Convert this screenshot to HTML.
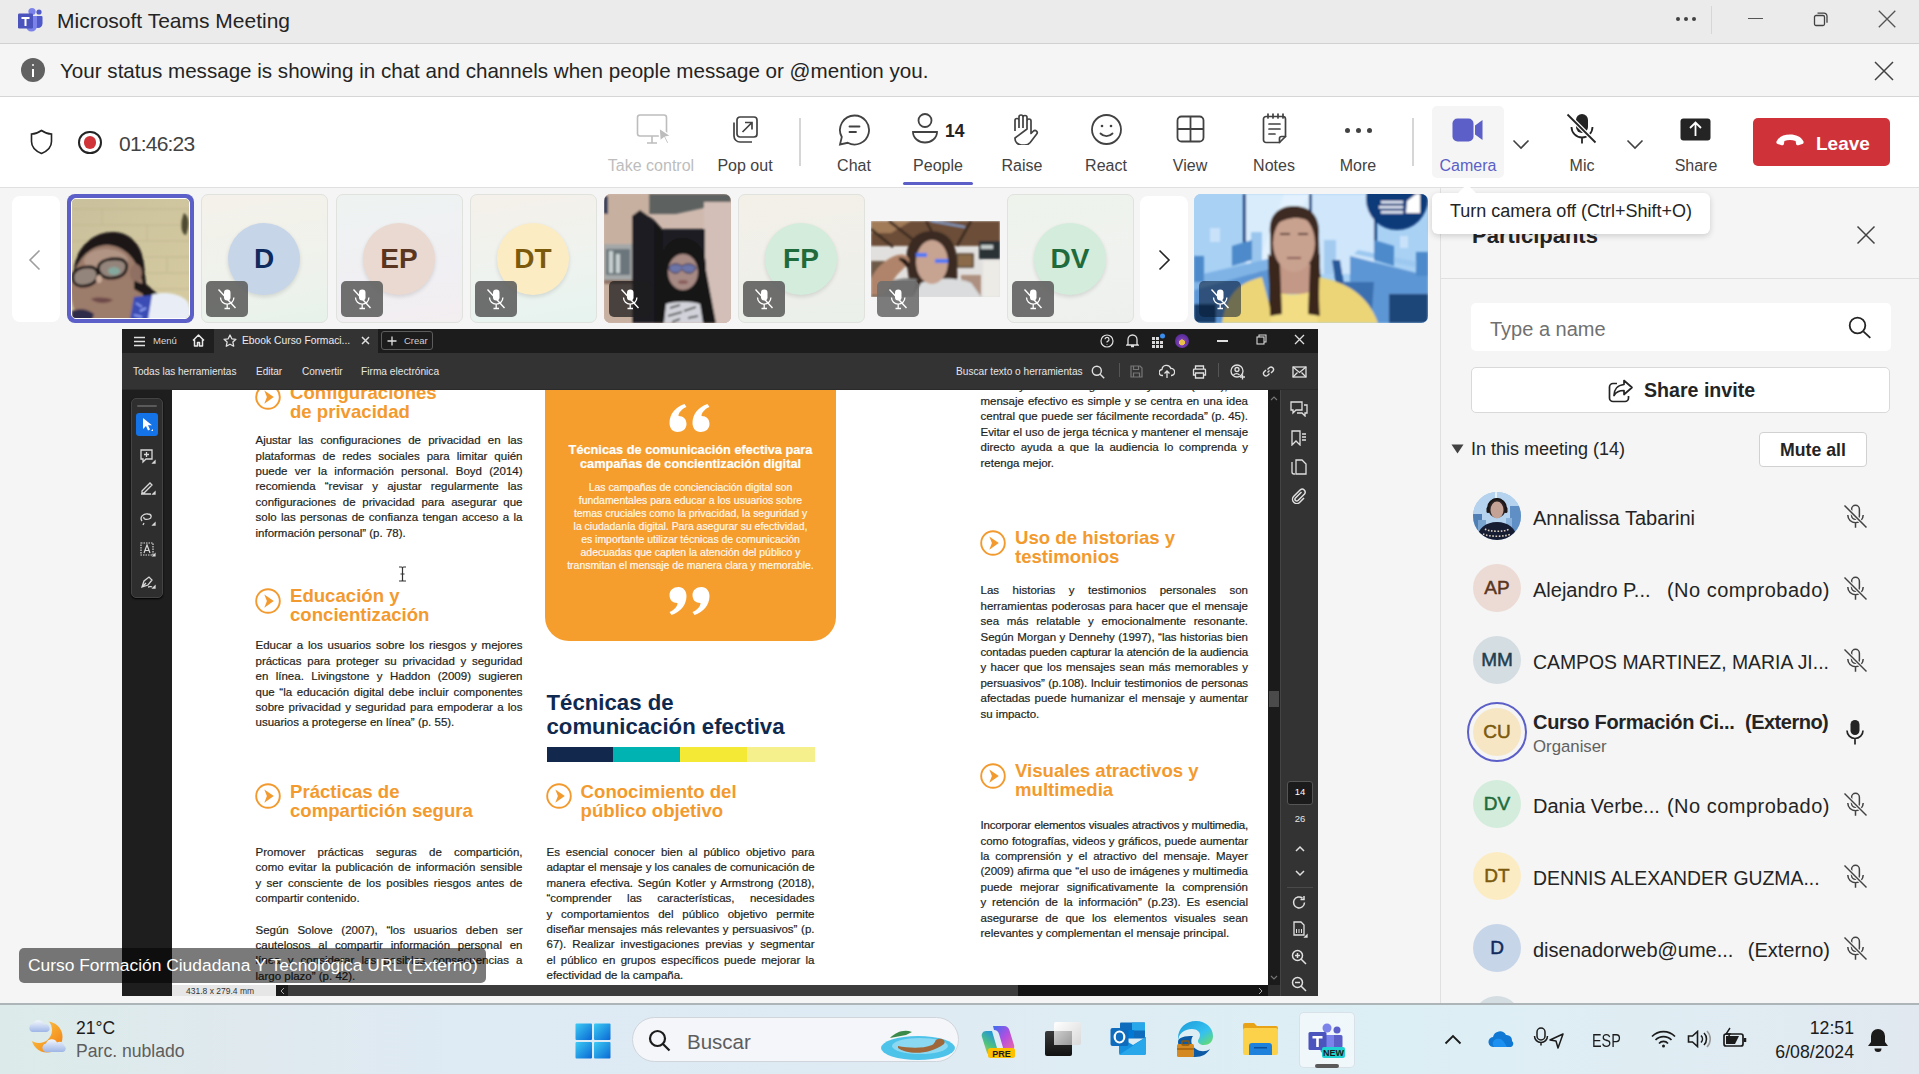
<!DOCTYPE html>
<html><head><meta charset="utf-8">
<style>
*{box-sizing:border-box;margin:0;padding:0}
html,body{width:1919px;height:1074px;overflow:hidden;background:#f5f5f5;font-family:"Liberation Sans",sans-serif;color:#242424}
.a{position:absolute}
#title{left:0;top:0;width:1919px;height:44px;background:#ebebeb;border-bottom:1px solid #d1d1d1}
#banner{left:0;top:44px;width:1919px;height:53px;background:#f5f5f5;border-bottom:1px solid #d6d6d6}
#tb{left:0;top:97px;width:1919px;height:91px;background:#fff;border-bottom:1px solid #e0e0e0}
.lbl{font-size:16px;color:#424242;text-align:center;width:90px;top:60px;white-space:nowrap}
#strip{left:0;top:188px;width:1440px;height:816px;background:#f5f5f5}
#panel{left:1440px;top:188px;width:479px;height:816px;background:#f5f5f5;border-left:1px solid #e0e0e0}
#taskbar{left:0;top:1003px;width:1919px;height:71px;background:linear-gradient(90deg,#dcebea 0,#dfe9ee 13%,#deeaf4 24%,#dfebf3 50%,#dceff5 73%,#dfedf3 85%,#e1e8f0 100%);border-top:2px solid #adb5b9}
#share{left:122px;top:329px;width:1196px;height:667px;background:#1e1e1e;overflow:hidden}
.ln{position:absolute;white-space:normal;-webkit-text-stroke:0.2px currentColor}
</style></head><body>
<!-- TITLE BAR -->
<div id="title" class="a">
  <svg class="a" style="left:17px;top:7px" width="27" height="25" viewBox="0 0 27 25">
    <circle cx="15" cy="4.5" r="3.6" fill="#7b83eb"/>
    <circle cx="22" cy="5" r="2.6" fill="#5059c9"/>
    <path d="M17 9h7.5a1 1 0 0 1 1 1v6.5a4.5 4.5 0 0 1-9 0z" fill="#5059c9"/>
    <path d="M9 9h11v10a5.5 5.5 0 0 1-11 0z" fill="#7b83eb"/>
    <rect x="1" y="6.5" width="15" height="15" rx="1.2" fill="#4b53bc"/>
    <path d="M4.5 10h8v2h-3v7h-2v-7h-3z" fill="#fff"/>
  </svg>
  <div class="a" style="left:57px;top:9px;font-size:21px;color:#242424;white-space:nowrap">Microsoft Teams Meeting</div>
  <div class="a" style="left:1676px;top:17px;width:22px;height:4px">
    <span class="a" style="left:0;top:0;width:4px;height:4px;border-radius:2px;background:#424242"></span>
    <span class="a" style="left:8px;top:0;width:4px;height:4px;border-radius:2px;background:#424242"></span>
    <span class="a" style="left:16px;top:0;width:4px;height:4px;border-radius:2px;background:#424242"></span>
  </div>
  <div class="a" style="left:1711px;top:6px;width:1px;height:28px;background:#d6d6d6"></div>
  <div class="a" style="left:1747.5px;top:17.5px;width:15px;height:1.4px;background:#555"></div>
  <svg class="a" style="left:1812px;top:10px" width="18" height="18" viewBox="0 0 18 18" fill="none" stroke="#424242" stroke-width="1.3">
    <rect x="2.5" y="5.5" width="10" height="10" rx="1.5"/>
    <path d="M5.5 3.2h6.5a3 3 0 0 1 3 3v6.5"/>
  </svg>
  <svg class="a" style="left:1877px;top:9px" width="20" height="20" viewBox="0 0 20 20" stroke="#555" stroke-width="1.3">
    <path d="M1.8 1.8L18.3 18.3M18.3 1.8L1.8 18.3"/>
  </svg>
</div>
<!-- BANNER -->
<div id="banner" class="a">
  <div class="a" style="left:21px;top:14px;width:24px;height:24px;border-radius:12px;background:#616161"></div>
  <div class="a" style="left:32px;top:20px;width:2.4px;height:2.4px;border-radius:2px;background:#fff"></div>
  <div class="a" style="left:32px;top:24.5px;width:2.4px;height:8.5px;background:#fff"></div>
  <div class="a" style="left:60px;top:15px;font-size:20.6px;color:#242424;white-space:nowrap">Your status message is showing in chat and channels when people message or @mention you.</div>
  <svg class="a" style="left:1874px;top:17px" width="20" height="20" viewBox="0 0 20 20" stroke="#424242" stroke-width="1.5">
    <path d="M1 1L19 19M19 1L1 19"/>
  </svg>
</div>
<!-- TOOLBAR -->
<div id="tb" class="a">
  <svg class="a" style="left:30px;top:32px" width="23" height="26" viewBox="0 0 23 26" fill="none" stroke="#242424" stroke-width="1.6">
    <path d="M11.5 1.5C8 4 5 5 1.5 5v7.5c0 6 4 9.5 10 12 6-2.5 10-6 10-12V5c-3.5 0-6.5-1-10-3.5z"/>
  </svg>
  <div class="a" style="left:78px;top:33.5px;width:23.5px;height:23.5px;border-radius:12px;border:2.8px solid #242424"></div>
  <div class="a" style="left:83.5px;top:39px;width:12.5px;height:12.5px;border-radius:7px;background:#d13438"></div>
  <div class="a" style="left:119px;top:35px;font-size:21px;color:#424242;white-space:nowrap;letter-spacing:-0.8px">01:46:23</div>

  <!-- take control -->
  <svg class="a" style="left:633px;top:17px" width="40" height="34" viewBox="0 0 40 34" fill="none" stroke="#bdbdbd" stroke-width="1.6">
    <rect x="4.5" y="1" width="29" height="21" rx="2.5"/>
    <path d="M14 29h10M19 22v7"/>
    <path d="M26 14l12 8-5 1 3 6-2 1-3-6-4 3z" fill="#bdbdbd" stroke="#fff" stroke-width="1.5"/>
  </svg>
  <div class="a lbl" style="left:606px;color:#bdbdbd">Take control</div>
  <!-- pop out -->
  <svg class="a" style="left:731px;top:19px" width="28" height="28" viewBox="0 0 28 28" fill="none" stroke="#424242" stroke-width="1.7">
    <rect x="6" y="1" width="20" height="20" rx="3"/>
    <path d="M3 6.5v13.5a6 6 0 0 0 6 6h12"/>
    <path d="M11.5 16L20.5 7M14 6.5h7v7"/>
  </svg>
  <div class="a lbl" style="left:700px">Pop out</div>
  <div class="a" style="left:799px;top:21px;width:2px;height:48px;background:#d6d6d6"></div>
  <!-- chat -->
  <svg class="a" style="left:838px;top:17px" width="33" height="32" viewBox="0 0 33 32" fill="none" stroke="#424242" stroke-width="1.8">
    <path d="M16.5 1.5a14.5 14.5 0 1 1-6.8 27.3L2 30.5l1.8-7.5A14.5 14.5 0 0 1 16.5 1.5z"/>
    <path d="M11.5 12.5h10M11.5 18h6.5" stroke-linecap="round"/>
  </svg>
  <div class="a lbl" style="left:809px">Chat</div>
  <!-- people -->
  <svg class="a" style="left:911px;top:16px" width="29" height="31" viewBox="0 0 29 31" fill="none" stroke="#424242" stroke-width="1.8">
    <circle cx="14" cy="7.5" r="6.5"/>
    <path d="M2 19h24c0 6-5.5 10.5-12 10.5S2 25 2 19z"/>
  </svg>
  <div class="a" style="left:945px;top:24px;font-size:17.5px;font-weight:700;color:#242424">14</div>
  <div class="a lbl" style="left:893px">People</div>
  <div class="a" style="left:903px;top:85px;width:70px;height:3px;border-radius:2px;background:#5b5fc7"></div>
  <!-- raise -->
  <svg class="a" style="left:1009px;top:17px" width="30" height="31" viewBox="0 0 30 31" fill="none" stroke="#424242" stroke-width="1.7" stroke-linejoin="round">
    <path d="M6 17V6.5a2 2 0 0 1 4 0V14M10 14V3a2 2 0 0 1 4 0v11M14 14V3.5a2 2 0 0 1 4 0V15M18 15V7a2 2 0 0 1 4 0v12.5l2.5-2.5a2.2 2.2 0 0 1 3.2 3l-6.5 8.5c-1.5 1.8-3.5 2.5-5.5 2.5h-3.2A6.5 6.5 0 0 1 6 24z"/>
  </svg>
  <div class="a lbl" style="left:977px">Raise</div>
  <!-- react -->
  <svg class="a" style="left:1090px;top:16px" width="33" height="33" viewBox="0 0 33 33" fill="none" stroke="#424242" stroke-width="1.8">
    <circle cx="16.5" cy="16.5" r="14.5"/>
    <path d="M10.5 20.5c3.5 3.5 8.5 3.5 12 0" stroke-linecap="round"/>
    <circle cx="12" cy="13" r="1.3" fill="#424242" stroke="none"/>
    <circle cx="21" cy="13" r="1.3" fill="#424242" stroke="none"/>
  </svg>
  <div class="a lbl" style="left:1061px">React</div>
  <!-- view -->
  <svg class="a" style="left:1176px;top:18px" width="29" height="28" viewBox="0 0 29 28" fill="none" stroke="#424242" stroke-width="1.8">
    <rect x="1.5" y="1.5" width="26" height="25" rx="4"/>
    <path d="M14.5 1.5v25M1.5 14h26"/>
  </svg>
  <div class="a lbl" style="left:1145px">View</div>
  <!-- notes -->
  <svg class="a" style="left:1261px;top:16px" width="27" height="31" viewBox="0 0 27 31" fill="none" stroke="#424242" stroke-width="1.7">
    <path d="M5 3.5h17a2.5 2.5 0 0 1 2.5 2.5v17.5l-6 6H5A2.5 2.5 0 0 1 2.5 27V6A2.5 2.5 0 0 1 5 3.5z"/>
    <path d="M18.5 29.5v-4a2 2 0 0 1 2-2h4M7 1v4M12 1v4M17 1v4M22 1v4M8 11h11M8 16h11M8 21h6" stroke-linecap="round"/>
  </svg>
  <div class="a lbl" style="left:1229px">Notes</div>
  <!-- more -->
  <div class="a" style="left:1345px;top:31px;width:5px;height:5px;border-radius:3px;background:#424242"></div>
  <div class="a" style="left:1356px;top:31px;width:5px;height:5px;border-radius:3px;background:#424242"></div>
  <div class="a" style="left:1367px;top:31px;width:5px;height:5px;border-radius:3px;background:#424242"></div>
  <div class="a lbl" style="left:1313px">More</div>
  <div class="a" style="left:1412px;top:21px;width:2px;height:48px;background:#d6d6d6"></div>
  <!-- camera -->
  <div class="a" style="left:1432px;top:9px;width:72px;height:72px;border-radius:5px;background:#f5f5f5"></div>
  <svg class="a" style="left:1452px;top:21px" width="32" height="24" viewBox="0 0 32 24">
    <rect x="0.5" y="0.5" width="21" height="23" rx="5" fill="#5b5fc7"/>
    <path d="M23 7.5l7.5-5.5v20l-7.5-5.5z" fill="#5b5fc7"/>
  </svg>
  <div class="a lbl" style="left:1423px;color:#5b5fc7">Camera</div>
  <svg class="a" style="left:1512px;top:42px" width="18" height="11" viewBox="0 0 18 11" fill="none" stroke="#424242" stroke-width="1.6"><path d="M1.5 1.5l7.5 7.5 7.5-7.5"/></svg>
  <!-- mic -->
  <svg class="a" style="left:1565px;top:16px" width="34" height="32" viewBox="0 0 34 32">
    <rect x="11" y="1" width="12" height="19" rx="6" fill="#242424"/>
    <path d="M6.5 14a10.5 10.5 0 0 0 21 0M17 24.5v6" fill="none" stroke="#242424" stroke-width="1.8"/>
    <path d="M2.5 1.5l28 28" stroke="#fff" stroke-width="4.5"/>
    <path d="M2.5 1.5l28 28" stroke="#242424" stroke-width="1.8"/>
  </svg>
  <div class="a lbl" style="left:1537px">Mic</div>
  <svg class="a" style="left:1626px;top:42px" width="18" height="11" viewBox="0 0 18 11" fill="none" stroke="#424242" stroke-width="1.6"><path d="M1.5 1.5l7.5 7.5 7.5-7.5"/></svg>
  <!-- share -->
  <svg class="a" style="left:1680px;top:21px" width="31" height="23" viewBox="0 0 31 23">
    <rect x="0.5" y="0.5" width="30" height="22" rx="3" fill="#242424"/>
    <path d="M15.5 18V5M10 10l5.5-5.5 5.5 5.5" fill="none" stroke="#fff" stroke-width="1.8"/>
  </svg>
  <div class="a lbl" style="left:1651px">Share</div>
  <!-- leave -->
  <div class="a" style="left:1753px;top:21px;width:137px;height:48px;border-radius:5px;background:#cf3339"></div>
  <svg class="a" style="left:1775px;top:36px" width="30" height="15" viewBox="0 0 30 15">
    <path d="M1.5 8.5C4 3.5 9 1.5 15 1.5s11 2 13.5 7c.4 1-.2 2.2-1.2 2.5l-4 1.2c-1 .3-2-.3-2.2-1.3l-.5-2.8c-1.8-.7-3.7-1-5.6-1s-3.8.3-5.6 1l-.5 2.8c-.2 1-1.2 1.6-2.2 1.3l-4-1.2C1.7 10.7 1.1 9.500 1.5 8.5z" fill="#fff"/>
  </svg>
  <div class="a" style="left:1816px;top:36px;font-size:19px;font-weight:700;color:#fff">Leave</div>
</div>
<div id="strip" class="a"></div>
<div class="a" style="left:12px;top:196px;width:48px;height:126px;border-radius:8px;background:#fff"></div>
<svg class="a" style="left:28px;top:249px" width="14" height="22" viewBox="0 0 14 22" fill="none" stroke="#9e9e9e" stroke-width="1.6"><path d="M11.5 1.5L2 11l9.5 9.5"/></svg>
<div class="a" style="left:1140px;top:196px;width:48px;height:126px;border-radius:8px;background:#fff"></div>
<svg class="a" style="left:1157px;top:249px" width="14" height="22" viewBox="0 0 14 22" fill="none" stroke="#242424" stroke-width="1.6"><path d="M2.5 1.5L12 11l-9.5 9.5"/></svg>
<div class="a" style="left:201px;top:194px;width:127px;height:129px;border-radius:7px;background:linear-gradient(170deg,#f4f1ea,#eef2ec 70%,#e6f2ea);border:1px solid #dfe2dd"></div>
<div class="a" style="left:228px;top:223px;width:72px;height:72px;border-radius:36px;background:#c7d5e9;box-shadow:0 2px 4px rgba(0,0,0,0.12);color:#0f2a5c;font-size:28px;font-weight:700;text-align:center;line-height:72px;letter-spacing:0px">D</div>
<div class="a" style="left:206px;top:281px;width:42px;height:36px;border-radius:5px;background:rgba(95,97,95,0.9)"></div>
<svg class="a" style="left:216px;top:288px" width="22" height="22" viewBox="0 0 22 22"><rect x="8" y="1.5" width="6.5" height="11" rx="3.25" fill="#fff"/><path d="M4.5 9.5a6.7 6.7 0 0 0 13.4 0M11.2 16.5v4M8.5 20.5h5.5" fill="none" stroke="#fff" stroke-width="1.3"/><path d="M2.5 1.5L19.5 20" stroke="#fff" stroke-width="1.4"/></svg>
<div class="a" style="left:336px;top:194px;width:127px;height:129px;border-radius:7px;background:linear-gradient(170deg,#eef3f1,#f0eff3 60%,#f3eef0);border:1px solid #dfe2dd"></div>
<div class="a" style="left:363px;top:223px;width:72px;height:72px;border-radius:36px;background:#ead9d1;box-shadow:0 2px 4px rgba(0,0,0,0.12);color:#5a3620;font-size:28px;font-weight:700;text-align:center;line-height:72px;letter-spacing:0px">EP</div>
<div class="a" style="left:341px;top:281px;width:42px;height:36px;border-radius:5px;background:rgba(95,97,95,0.9)"></div>
<svg class="a" style="left:351px;top:288px" width="22" height="22" viewBox="0 0 22 22"><rect x="8" y="1.5" width="6.5" height="11" rx="3.25" fill="#fff"/><path d="M4.5 9.5a6.7 6.7 0 0 0 13.4 0M11.2 16.5v4M8.5 20.5h5.5" fill="none" stroke="#fff" stroke-width="1.3"/><path d="M2.5 1.5L19.5 20" stroke="#fff" stroke-width="1.4"/></svg>
<div class="a" style="left:470px;top:194px;width:127px;height:129px;border-radius:7px;background:linear-gradient(170deg,#f5f0ea,#eef3ef 60%,#e6f3ef);border:1px solid #dfe2dd"></div>
<div class="a" style="left:497px;top:223px;width:72px;height:72px;border-radius:36px;background:#fcecc4;box-shadow:0 2px 4px rgba(0,0,0,0.12);color:#7b5a0c;font-size:28px;font-weight:700;text-align:center;line-height:72px;letter-spacing:0px">DT</div>
<div class="a" style="left:475px;top:281px;width:42px;height:36px;border-radius:5px;background:rgba(95,97,95,0.9)"></div>
<svg class="a" style="left:485px;top:288px" width="22" height="22" viewBox="0 0 22 22"><rect x="8" y="1.5" width="6.5" height="11" rx="3.25" fill="#fff"/><path d="M4.5 9.5a6.7 6.7 0 0 0 13.4 0M11.2 16.5v4M8.5 20.5h5.5" fill="none" stroke="#fff" stroke-width="1.3"/><path d="M2.5 1.5L19.5 20" stroke="#fff" stroke-width="1.4"/></svg>
<div class="a" style="left:738px;top:194px;width:127px;height:129px;border-radius:7px;background:linear-gradient(170deg,#f3f0e8,#efefea 60%,#eaf0ea);border:1px solid #dfe2dd"></div>
<div class="a" style="left:765px;top:223px;width:72px;height:72px;border-radius:36px;background:#d3ecdb;box-shadow:0 2px 4px rgba(0,0,0,0.12);color:#1f6b3b;font-size:28px;font-weight:700;text-align:center;line-height:72px;letter-spacing:0px">FP</div>
<div class="a" style="left:743px;top:281px;width:42px;height:36px;border-radius:5px;background:rgba(95,97,95,0.9)"></div>
<svg class="a" style="left:753px;top:288px" width="22" height="22" viewBox="0 0 22 22"><rect x="8" y="1.5" width="6.5" height="11" rx="3.25" fill="#fff"/><path d="M4.5 9.5a6.7 6.7 0 0 0 13.4 0M11.2 16.5v4M8.5 20.5h5.5" fill="none" stroke="#fff" stroke-width="1.3"/><path d="M2.5 1.5L19.5 20" stroke="#fff" stroke-width="1.4"/></svg>
<div class="a" style="left:1007px;top:194px;width:127px;height:129px;border-radius:7px;background:linear-gradient(170deg,#eef3ec,#f0f2ef 60%,#eef0ee);border:1px solid #dfe2dd"></div>
<div class="a" style="left:1034px;top:223px;width:72px;height:72px;border-radius:36px;background:#d3ecdb;box-shadow:0 2px 4px rgba(0,0,0,0.12);color:#1f6b3b;font-size:28px;font-weight:700;text-align:center;line-height:72px;letter-spacing:0px">DV</div>
<div class="a" style="left:1012px;top:281px;width:42px;height:36px;border-radius:5px;background:rgba(95,97,95,0.9)"></div>
<svg class="a" style="left:1022px;top:288px" width="22" height="22" viewBox="0 0 22 22"><rect x="8" y="1.5" width="6.5" height="11" rx="3.25" fill="#fff"/><path d="M4.5 9.5a6.7 6.7 0 0 0 13.4 0M11.2 16.5v4M8.5 20.5h5.5" fill="none" stroke="#fff" stroke-width="1.3"/><path d="M2.5 1.5L19.5 20" stroke="#fff" stroke-width="1.4"/></svg>
<!-- tile 0 video selected -->
<div class="a" style="left:67px;top:194px;width:127px;height:129px;border-radius:8px;background:#5b5fc7"></div>
<div class="a" style="left:71px;top:198px;width:119px;height:121px;border-radius:5px;overflow:hidden;background:#cdc39b;border:1px solid #fff">
<svg width="119" height="121" viewBox="0 0 119 121">
  <defs><filter id="bl0" x="-10%" y="-10%" width="120%" height="120%"><feGaussianBlur stdDeviation="1.2"/></filter>
  <linearGradient id="w0" x1="0" y1="0" x2="1" y2="1"><stop offset="0" stop-color="#c9c09c"/><stop offset="1" stop-color="#d6cba0"/></linearGradient></defs>
  <rect width="119" height="121" fill="url(#w0)"/>
  <g filter="url(#bl0)">
  <path d="M0 10h119M0 26h119M0 42h119M0 58h119M0 74h119M0 90h119M0 106h119M30 10v16M75 26v16M50 42v16M95 58v16M20 74v16" stroke="#bdb38c" stroke-width="1" opacity="0.7"/>
  <path d="M112 14c5 3 6 12 2 22-4 0-7-10-2-22z" fill="#4d4a30"/>
  <path d="M2 70C4 48 22 32 42 33c18 1 28 14 30 32l2 20 12 10-10 6-14-12c-2-16-6-26-20-30C28 56 10 60 2 72z" fill="#1b1819"/>
  <ellipse cx="35" cy="92" rx="36" ry="46" fill="#9c7b6b"/>
  <ellipse cx="34" cy="62" rx="22" ry="12" fill="#b19484"/>
  <ellipse cx="64" cy="74" rx="6" ry="9" fill="#8f6f62"/>
  <path d="M62 82c8 2 16 6 22 12l-8 4-14-8z" fill="#1b1819"/>
  <path d="M1 76c2-6 10-9 18-8 6 1 8 6 6 11-2 6-10 9-17 8-5-1-8-5-7-11zM27 66c3-5 12-7 20-6 7 1 9 6 7 11-2 6-10 9-18 8-7-1-11-7-9-13z" fill="#94857b" stroke="#1b1517" stroke-width="2.8"/><ellipse cx="42" cy="72" rx="6" ry="4" fill="#7fb0a8" opacity="0.8"/>
  <path d="M25 75l2-1" stroke="#1b1517" stroke-width="2"/>
  <ellipse cx="27" cy="80" rx="3" ry="4" fill="#c9aa98"/>
  <path d="M19 100c6-2 14-2 22 1-6 4-16 4-22-1z" fill="#6e4c49"/>
  <path d="M79 96c12-4 28-2 36 6 3 4 4 10 4 19H74z" fill="#e9eef6"/>
  <path d="M62 98l18-2-4 25H58z" fill="#3a4db5"/>
  <path d="M64 104l6 4M68 112l6-3M62 116l8 2" stroke="#9fb0ff" stroke-width="1.5"/>
  <path d="M0 112c8-3 16-2 22 3l-2 6H0z" fill="#2e2a48"/>
  </g>
</svg></div>
<!-- tile 4 video -->
<div class="a" style="left:604px;top:194px;width:127px;height:129px;border-radius:7px;overflow:hidden;background:#c9b2a6">
<svg width="127" height="129" viewBox="0 0 127 129">
  <defs><filter id="bl4" x="-10%" y="-10%" width="120%" height="120%"><feGaussianBlur stdDeviation="1.1"/></filter></defs>
  <rect width="127" height="129" fill="#cfb9ae"/>
  <g filter="url(#bl4)">
  <path d="M0 0h45v129H0z" fill="#c7b0a0"/>
  <path d="M45 0h82v8L72 20H45z" fill="#5d6261"/>
  <path d="M100 8h27v121h-27z" fill="#d3bfb8"/>
  <rect x="0" y="2" width="4" height="18" fill="#2c3b5a"/>
  <path d="M0 50h30v36H0z" fill="#a5a8a8"/>
  <path d="M2 55h24v26H2z" fill="#6a767c"/>
  <path d="M5 57h4v22H5zM12 60h4v19h-4z" fill="#c8d0d0"/>
  <path d="M0 86h30v4H0z" fill="#8d7060"/>
  <path d="M28 22l8-6 14 10v103H28z" fill="#1e1d20"/>
  <path d="M50 26l9 10v93h-9z" fill="#161518"/>
  <path d="M59 35h42v94H59z" fill="#1d1b20"/>
  <path d="M57 82c-3-22 6-38 21-38s25 12 24 32l10 53H50z" fill="#171517"/>
  <ellipse cx="79" cy="78" rx="15" ry="18" fill="#a78a84"/>
  <path d="M65 73c3-4 9-4 13-1 4-3 10-3 14 1-1 5-5 7-8 6-3 0-5-2-6-4-2 3-5 5-8 4-4-1-5-3-5-6z" fill="#6c74a8" stroke="#3a2e40" stroke-width="1"/>
  <ellipse cx="79" cy="88" rx="5" ry="2" fill="#8a5e5c"/>
  <path d="M66 95c6 8 20 8 26 0l4 34H62z" fill="#141414"/>
  <path d="M62 110c8-3 26-3 34 0l3 19H60z" fill="#d2d3da"/>
  <path d="M66 114l10-3M80 117l12-4M64 122l14-4M84 124l10-2M68 128l8-3" stroke="#222" stroke-width="1.6"/>
  </g>
</svg></div>
<!-- tile 6 video partial -->
<div class="a" style="left:871px;top:221px;width:129px;height:76px;overflow:hidden;background:#dcd6d0">
<svg width="129" height="76" viewBox="0 0 129 76">
  <defs><filter id="bl6" x="-10%" y="-10%" width="120%" height="120%"><feGaussianBlur stdDeviation="0.9"/></filter></defs>
  <rect width="129" height="76" fill="#e2e0de"/>
  <g filter="url(#bl6)">
  <rect width="129" height="25" fill="#6c4e38"/>
  <path d="M0 0h40l-20 12H0z" fill="#a27c58"/>
  <path d="M18 0l32 25M55 0l12 22M100 0l-14 25M0 8l22 18" stroke="#3a2a20" stroke-width="2.6"/>
  <path d="M60 0L94 6" stroke="#8ab0e8" stroke-width="2" opacity="0.8"/>
  <rect x="0" y="40" width="14" height="36" fill="#6e5a48"/>
  <rect x="86" y="33" width="16" height="13" fill="#8a6a48" stroke="#3a2e28" stroke-width="1.2"/>
  <rect x="108" y="20" width="21" height="18" fill="#2c3234"/>
  <rect x="110" y="24" width="12" height="4" fill="#e8f0f0" opacity="0.8"/>
  <rect x="112" y="40" width="17" height="36" fill="#ecebe6"/>
  <path d="M90 54h20v22H90z" fill="#8a5a40" opacity="0.6"/>
  <path d="M36 45c-3-20 6-35 24-35 18 0 26 14 26 30 0 14 2 26-4 36H40c-2-10-2-20-4-31z" fill="#3b2a22"/>
  <path d="M8 76l8-14c8-4 20-6 30-4l-4 18z" fill="#7a7a7a"/>
  <path d="M50 62c12-6 36-6 50 0l10 14H42z" fill="#dadcdd"/>
  <ellipse cx="61" cy="41" rx="16" ry="22" fill="#c7a391"/>
  <path d="M45 34h11M64 40h13" stroke="#4f78f4" stroke-width="4"/>
  <path d="M0 58c4-10 14-20 26-24 8-2 14 2 12 8l-12 12-14 20H0z" fill="#b0846a"/>
  <path d="M28 38c6 0 10 4 8 8" stroke="#2a1e18" stroke-width="3"/>
  </g>
</svg></div>
<!-- big tile -->
<div class="a" style="left:1194px;top:194px;width:234px;height:129px;border-radius:7px;overflow:hidden;background:#9cc8f0">
<svg width="234" height="129" viewBox="0 0 234 129">
  <defs><filter id="blb" x="-10%" y="-10%" width="120%" height="120%"><feGaussianBlur stdDeviation="1"/></filter></defs>
  <rect width="234" height="129" fill="#a9d1f4"/>
  <g filter="url(#blb)">
  <rect x="52" y="0" width="63" height="80" fill="#d9ecfc"/>
  <rect x="118" y="0" width="62" height="80" fill="#cfe6fb"/>
  <path d="M90 0l25 0-40 80H60z" fill="#e6f3fe" opacity="0.7"/>
  <rect x="49" y="0" width="3" height="54" fill="#1f4b86"/>
  <rect x="115" y="0" width="3" height="54" fill="#1f4b86"/>
  <rect x="180" y="0" width="3" height="54" fill="#1f4b86"/>
  <rect x="57" y="38" width="11" height="40" fill="#9ac6ee"/>
  <rect x="130" y="46" width="12" height="34" fill="#a3cbf0"/>
  <rect x="16" y="34" width="10" height="14" fill="#c9e2fa"/>
  <rect x="206" y="42" width="8" height="12" fill="#c9e2fa"/>
  <path d="M0 82l78-18v10L0 96z" fill="#7fb3e6"/>
  <path d="M0 96l78-22v55H0z" fill="#5d96d4"/>
  <path d="M156 62l78 20v47h-78z" fill="#5d96d4"/>
  <path d="M160 60l74 16v-6l-70-14z" fill="#9cc8f0"/>
  <path d="M38 52l20-6v20l-20 6z" fill="#4e8acb"/>
  <path d="M180 46l20 6v20l-20-6z" fill="#4e8acb"/>
  <rect x="0" y="62" width="10" height="26" fill="#4e8acb"/>
  <rect x="222" y="58" width="12" height="24" fill="#4e8acb"/>
  <path d="M138 66l8 0 8 50h-8z" fill="#27599a"/>
  <path d="M195 100h39v29h-39z" fill="#1a4478"/>
  <path d="M0 110h22v19H0z" fill="#163a66"/>
  <path d="M150 88h30l-2 28h-30z" fill="#3a6fb0"/>
  <circle cx="203" cy="5" r="31" fill="#0e3b7a"/>
  <path d="M213 7l9-7h4v19h-14z" fill="#fff"/>
  <rect x="187" y="7" width="22" height="2.5" fill="#e8eef8"/>
  <rect x="185" y="12" width="24" height="2.5" fill="#e8eef8"/>
  <rect x="187" y="17" width="22" height="2.5" fill="#e8eef8"/>
  <path d="M76 40c-2-18 8-28 24-28s26 10 25 28c0 22 2 50 4 82l-10 4-10-44H88l-4 44-10-4c2-30 3-58 2-82z" fill="#3e2a22"/>
  <path d="M28 129c4-26 14-40 40-46l12 46z" fill="#ecd577"/>
  <path d="M122 83c30 4 52 18 62 46h-62z" fill="#ecd577"/>
  <path d="M84 70h32v30H84z" fill="#c39886"/><path d="M80 96c6 6 30 6 40 0l4 33H76z" fill="#f2dd84"/>
  <ellipse cx="100" cy="49" rx="21" ry="29" fill="#c9a18f"/>
  <path d="M86 40h10M104 40h10" stroke="#5a4038" stroke-width="2.2"/>
  <path d="M93 64h14" stroke="#8a5e58" stroke-width="2"/>
  <path d="M78 34c4-14 14-20 24-20 10 0 20 6 22 20-8-8-16-10-22-10s-16 2-24 10z" fill="#3e2a22"/>
  <path d="M74 60c0 20 2 40 2 62l12-2-2-50zM126 60c0 20-2 40 0 62l-12-2 2-50z" fill="#3a261f"/>
  </g>
</svg></div>

<div class="a" style="left:609px;top:281px;width:42px;height:36px;border-radius:5px;background:rgba(30,28,30,0.75)"></div>
<svg class="a" style="left:619px;top:288px" width="22" height="22" viewBox="0 0 22 22"><rect x="8" y="1.5" width="6.5" height="11" rx="3.25" fill="#fff"/><path d="M4.5 9.5a6.7 6.7 0 0 0 13.4 0M11.2 16.5v4M8.5 20.5h5.5" fill="none" stroke="#fff" stroke-width="1.3"/><path d="M2.5 1.5L19.5 20" stroke="#fff" stroke-width="1.4"/></svg><div class="a" style="left:877px;top:281px;width:42px;height:36px;border-radius:5px;background:rgba(110,110,110,0.9)"></div>
<svg class="a" style="left:887px;top:288px" width="22" height="22" viewBox="0 0 22 22"><rect x="8" y="1.5" width="6.5" height="11" rx="3.25" fill="#fff"/><path d="M4.5 9.5a6.7 6.7 0 0 0 13.4 0M11.2 16.5v4M8.5 20.5h5.5" fill="none" stroke="#fff" stroke-width="1.3"/><path d="M2.5 1.5L19.5 20" stroke="#fff" stroke-width="1.4"/></svg><div class="a" style="left:1199px;top:281px;width:42px;height:36px;border-radius:5px;background:rgba(10,25,50,0.55)"></div>
<svg class="a" style="left:1209px;top:288px" width="22" height="22" viewBox="0 0 22 22"><rect x="8" y="1.5" width="6.5" height="11" rx="3.25" fill="#fff"/><path d="M4.5 9.5a6.7 6.7 0 0 0 13.4 0M11.2 16.5v4M8.5 20.5h5.5" fill="none" stroke="#fff" stroke-width="1.3"/><path d="M2.5 1.5L19.5 20" stroke="#fff" stroke-width="1.4"/></svg>
<div id="panel" class="a"></div>
<div id="share" class="a">
  <!-- row1 -->
  <div class="a" style="left:0;top:0;width:1196px;height:24px;background:#1c1c1c"></div>
  <div class="a" style="left:0;top:0;width:92px;height:24px;background:#1f1f1f"></div>
  <div class="a" style="left:92px;top:0;width:164px;height:24px;background:#333"></div>
  <svg class="a" style="left:11px;top:7px" width="14" height="11" viewBox="0 0 14 11" stroke="#e0e0e0" stroke-width="1.4"><path d="M1 1.5h11M1 5.5h11M1 9.5h11"/></svg>
  <div class="a" style="left:31px;top:6px;font-size:9.5px;color:#d8d8d8">Menú</div>
  <svg class="a" style="left:69px;top:4px" width="15" height="15" viewBox="0 0 15 15" fill="none" stroke="#e8e8e8" stroke-width="1.5" stroke-linejoin="round"><path d="M2 7.5L7.5 2 13 7.5M3.5 6.5v6.5h3v-3.5h2V13h3V6.5"/></svg>
  <svg class="a" style="left:101px;top:5px" width="14" height="13" viewBox="0 0 14 13" fill="none" stroke="#e0e0e0" stroke-width="1.3" stroke-linejoin="round"><path d="M7 1l1.8 3.8 4.1.5-3 2.8.8 4.1L7 10.2 3.3 12.2l.8-4.1-3-2.8 4.1-.5z"/></svg>
  <div class="a" style="left:120px;top:6px;font-size:10.3px;color:#ececec;white-space:nowrap">Ebook Curso Formaci...</div>
  <svg class="a" style="left:239px;top:7px" width="9" height="9" viewBox="0 0 9 9" stroke="#e0e0e0" stroke-width="1.5"><path d="M1 1l7 7M8 1L1 8"/></svg>
  <div class="a" style="left:259px;top:2px;width:52px;height:19px;border:1px solid #5c5c5c;border-radius:3px"></div>
  <svg class="a" style="left:265px;top:7px" width="10" height="10" viewBox="0 0 10 10" stroke="#e0e0e0" stroke-width="1.3"><path d="M5 0.5v9M0.5 5h9"/></svg>
  <div class="a" style="left:282px;top:6px;font-size:9.5px;color:#d0d0d0">Crear</div>
  <svg class="a" style="left:978px;top:5px" width="14" height="14" viewBox="0 0 14 14" fill="none" stroke="#e0e0e0" stroke-width="1.2"><circle cx="7" cy="7" r="6"/><path d="M5 5.3a2 2 0 1 1 2.5 2c-.5.2-.5.6-.5 1.2M7 10.2v.6"/></svg>
  <svg class="a" style="left:1004px;top:4px" width="13" height="15" viewBox="0 0 13 15" fill="none" stroke="#e0e0e0" stroke-width="1.3"><path d="M2 11V6.5a4.5 4.5 0 0 1 9 0V11l1 1H1zM5 13.5h3"/></svg>
  <svg class="a" style="left:1029px;top:4px" width="15" height="15" viewBox="0 0 15 15" fill="#d8d8d8"><rect x="1" y="4" width="3" height="3"/><rect x="5" y="4" width="3" height="3"/><rect x="1" y="8" width="3" height="3"/><rect x="5" y="8" width="3" height="3"/><rect x="9" y="8" width="3" height="3"/><rect x="1" y="12" width="3" height="3"/><rect x="5" y="12" width="3" height="3"/><rect x="9" y="12" width="3" height="3"/><circle cx="11.5" cy="3" r="2.5" fill="#3a8ef0"/></svg>
  <div class="a" style="left:1053px;top:5px;width:14px;height:14px;border-radius:7px;background:radial-gradient(circle at 50% 60%,#e8c04a 0 25%,#7a3fb0 30%,#5a2d9a 70%)"></div>
  <div class="a" style="left:1095px;top:11px;width:11px;height:1.5px;background:#e0e0e0"></div>
  <svg class="a" style="left:1134px;top:5px" width="11" height="11" viewBox="0 0 11 11" fill="none" stroke="#d8d8d8" stroke-width="1.1"><rect x="1" y="3" width="7" height="7"/><path d="M3 3V1h7v7H8"/></svg>
  <svg class="a" style="left:1172px;top:5px" width="11" height="11" viewBox="0 0 11 11" stroke="#e0e0e0" stroke-width="1.3"><path d="M1 1l9 9M10 1L1 10"/></svg>
  <!-- row2 -->
  <div class="a" style="left:0;top:24px;width:1196px;height:36px;background:#333"></div>
  <div class="a" style="left:11px;top:37px;font-size:10px;color:#e6e6e6;white-space:nowrap">Todas las herramientas</div>
  <div class="a" style="left:134px;top:37px;font-size:10px;color:#e6e6e6">Editar</div>
  <div class="a" style="left:180px;top:37px;font-size:10px;color:#e6e6e6">Convertir</div>
  <div class="a" style="left:239px;top:37px;font-size:10.2px;color:#e6e6e6;white-space:nowrap">Firma electrónica</div>
  <div class="a" style="left:834px;top:37px;font-size:10.15px;color:#e6e6e6;white-space:nowrap">Buscar texto o herramientas</div>
  <svg class="a" style="left:969px;top:36px" width="14" height="14" viewBox="0 0 14 14" fill="none" stroke="#e0e0e0" stroke-width="1.4"><circle cx="5.8" cy="5.8" r="4.5"/><path d="M9.2 9.2l4 4"/></svg>
  <div class="a" style="left:997px;top:34px;width:1px;height:14px;background:#555"></div>
  <svg class="a" style="left:1008px;top:36px" width="13" height="13" viewBox="0 0 13 13" fill="none" stroke="#777" stroke-width="1.2"><path d="M1 1h9l2 2v9H1z"/><path d="M3.5 1v3.5h5V1M3.5 12V8h6v4"/></svg>
  <svg class="a" style="left:1037px;top:35px" width="16" height="15" viewBox="0 0 16 15" fill="none" stroke="#e0e0e0" stroke-width="1.3"><path d="M4 11.5H3.5a3 3 0 0 1-.5-6A4.5 4.5 0 0 1 11.8 4.5a3.5 3.5 0 0 1 .7 7H12M8 14V7M5.5 9.5L8 7l2.5 2.5"/></svg>
  <svg class="a" style="left:1070px;top:36px" width="15" height="14" viewBox="0 0 15 14" fill="none" stroke="#e0e0e0" stroke-width="1.3"><path d="M3.5 4.5V1h8v3.5M3.5 10H1.5V5a.8.8 0 0 1 .8-.8h10.4a.8.8 0 0 1 .8.8v5h-2M3.5 8h8v5h-8z"/></svg>
  <div class="a" style="left:1096px;top:34px;width:1px;height:14px;background:#555"></div>
  <svg class="a" style="left:1108px;top:35px" width="16" height="16" viewBox="0 0 16 16" fill="none" stroke="#e0e0e0" stroke-width="1.3"><circle cx="7" cy="7" r="6"/><circle cx="7" cy="5.5" r="2"/><path d="M3.5 11a4 4 0 0 1 6 0M12.5 10.5v5M10 13h5"/></svg>
  <svg class="a" style="left:1139px;top:35px" width="15" height="15" viewBox="0 0 15 15" fill="none" stroke="#e0e0e0" stroke-width="1.4"><path d="M6.5 8.5l2-2M5 6L3 8a2.5 2.5 0 0 0 3.5 3.5l2-2M10 9l2-2a2.5 2.5 0 0 0-3.5-3.5l-2 2"/></svg>
  <svg class="a" style="left:1170px;top:37px" width="15" height="12" viewBox="0 0 15 12" fill="none" stroke="#e0e0e0" stroke-width="1.3"><rect x="1" y="1" width="13" height="10"/><path d="M1 1l6.5 5.5L14 1M1 11l4.5-4.5M14 11l-4.5-4.5"/></svg>
  <div class="a" style="left:0;top:60px;width:1196px;height:1px;background:#2a2a2a"></div>
  <!-- left rail -->
  <div class="a" style="left:0;top:61px;width:50px;height:606px;background:#1e1e1e"></div>
  <div class="a" style="left:9px;top:69px;width:32px;height:200px;border-radius:5px;background:#2e2e2e;border:1px solid #444;box-shadow:0 1px 2px #000"></div>
  <div class="a" style="left:15px;top:76px;width:20px;height:2px;border-radius:1px;background:#5a5a5a"></div>
  <div class="a" style="left:14px;top:84px;width:22px;height:23px;border-radius:3px;background:#1473e6"></div>
  <svg class="a" style="left:19px;top:88px" width="13" height="15" viewBox="0 0 13 15"><path d="M2 1v11l3-3 2 4.5 2-1-2-4.3h4z" fill="#fff"/><path d="M10 14l2-2v2z" fill="#fff"/></svg>
  <svg class="a" style="left:17px;top:119px" width="18" height="18" viewBox="0 0 18 18" fill="none" stroke="#d8d8d8" stroke-width="1.3"><path d="M2 2h11v9H7l-3 3v-3H2z"/><path d="M7.5 4v5M5 6.5h5"/><path d="M14 15l2-2v2z" fill="#d8d8d8"/></svg>
  <svg class="a" style="left:17px;top:150px" width="18" height="18" viewBox="0 0 18 18" fill="none" stroke="#d8d8d8" stroke-width="1.3"><path d="M3 12l8-8 2 2-8 8H3zM2 15h10"/><path d="M14 15l2-2v2z" fill="#d8d8d8"/></svg>
  <svg class="a" style="left:17px;top:181px" width="18" height="18" viewBox="0 0 18 18" fill="none" stroke="#d8d8d8" stroke-width="1.3"><path d="M3 11c-3-4 2-8 6-7 4 0 4 4 1 5-3 1-6 0-5-2M5 13l-1 2"/><path d="M14 15l2-2v2z" fill="#d8d8d8"/></svg>
  <svg class="a" style="left:17px;top:212px" width="18" height="18" viewBox="0 0 18 18" fill="none" stroke="#d8d8d8" stroke-width="1.2"><rect x="2" y="2" width="12" height="12" stroke-dasharray="1.5 1"/><path d="M5 12l3-8 3 8M6 9.5h4"/><path d="M14 15l2-2v2z" fill="#d8d8d8"/></svg>
  <svg class="a" style="left:17px;top:244px" width="18" height="18" viewBox="0 0 18 18" fill="none" stroke="#d8d8d8" stroke-width="1.3"><path d="M3 14l2-6 5-4 3 3-4 5zM3 14l4-4M9 14c2 0 3-1 4 0"/><path d="M14 15l2-2v2z" fill="#d8d8d8"/></svg>
  <!-- page -->
  <div class="a" style="left:50px;top:61px;width:1096px;height:595px;background:#fff;overflow:hidden">
<svg class="a" style="left:82.5px;top:-5.9px" width="26" height="26" viewBox="0 0 26 26"><circle cx="13" cy="13" r="11.8" fill="none" stroke="#f39a2f" stroke-width="1.9"/><path d="M9.3 6.5l9.5 6.6-9.5 6.6 2.6-6.6z" fill="#f39a2f"/></svg><div class="a" style="left:118px;top:-7.24px;font-size:18.6px;line-height:19.2px;font-weight:700;color:#f39a2f;white-space:nowrap">Configuraciones<br>de privacidad</div>
<div style="font-size:11.5px;line-height:15.4px;color:#231f20;font-weight:400"><div class="ln" style="top:43.12px;left:83.5px;width:267px;text-align:justify;text-align-last:justify">Ajustar las configuraciones de privacidad en las</div><div class="ln" style="top:58.52px;left:83.5px;width:267px;text-align:justify;text-align-last:justify">plataformas de redes sociales para limitar quién</div><div class="ln" style="top:73.92px;left:83.5px;width:267px;text-align:justify;text-align-last:justify">puede ver la información personal. Boyd (2014)</div><div class="ln" style="top:89.32px;left:83.5px;width:267px;text-align:justify;text-align-last:justify">recomienda “revisar y ajustar regularmente las</div><div class="ln" style="top:104.72px;left:83.5px;width:267px;text-align:justify;text-align-last:justify">configuraciones de privacidad para asegurar que</div><div class="ln" style="top:120.12px;left:83.5px;width:267px;text-align:justify;text-align-last:justify">solo las personas de confianza tengan acceso a la</div><div class="ln" style="top:135.52px;left:83.5px;width:267px;text-align:justify;text-align-last:left">información personal” (p. 78).</div></div>
<svg class="a" style="left:82.5px;top:197.6px" width="26" height="26" viewBox="0 0 26 26"><circle cx="13" cy="13" r="11.8" fill="none" stroke="#f39a2f" stroke-width="1.9"/><path d="M9.3 6.5l9.5 6.6-9.5 6.6 2.6-6.6z" fill="#f39a2f"/></svg><div class="a" style="left:118px;top:196.26px;font-size:18.6px;line-height:19.2px;font-weight:700;color:#f39a2f;white-space:nowrap">Educación y<br>concientización</div>
<div style="font-size:11.5px;line-height:15.4px;color:#231f20;font-weight:400"><div class="ln" style="top:248.32px;left:83.5px;width:267px;text-align:justify;text-align-last:justify">Educar a los usuarios sobre los riesgos y mejores</div><div class="ln" style="top:263.72px;left:83.5px;width:267px;text-align:justify;text-align-last:justify">prácticas para proteger su privacidad y seguridad</div><div class="ln" style="top:279.12px;left:83.5px;width:267px;text-align:justify;text-align-last:justify">en línea. Livingstone y Haddon (2009) sugieren</div><div class="ln" style="top:294.52px;left:83.5px;width:267px;text-align:justify;text-align-last:justify">que “la educación digital debe incluir componentes</div><div class="ln" style="top:309.92px;left:83.5px;width:267px;text-align:justify;text-align-last:justify">sobre privacidad y seguridad para empoderar a los</div><div class="ln" style="top:325.32px;left:83.5px;width:267px;text-align:justify;text-align-last:left">usuarios a protegerse en línea” (p. 55).</div></div>
<svg class="a" style="left:82.5px;top:393.0px" width="26" height="26" viewBox="0 0 26 26"><circle cx="13" cy="13" r="11.8" fill="none" stroke="#f39a2f" stroke-width="1.9"/><path d="M9.3 6.5l9.5 6.6-9.5 6.6 2.6-6.6z" fill="#f39a2f"/></svg><div class="a" style="left:118px;top:391.66px;font-size:18.6px;line-height:19.2px;font-weight:700;color:#f39a2f;white-space:nowrap">Prácticas de<br>compartición segura</div>
<div style="font-size:11.5px;line-height:15.4px;color:#231f20;font-weight:400"><div class="ln" style="top:455.02px;left:83.5px;width:267px;text-align:justify;text-align-last:justify">Promover prácticas seguras de compartición,</div><div class="ln" style="top:470.42px;left:83.5px;width:267px;text-align:justify;text-align-last:justify">como evitar la publicación de información sensible</div><div class="ln" style="top:485.82px;left:83.5px;width:267px;text-align:justify;text-align-last:justify">y ser consciente de los posibles riesgos antes de</div><div class="ln" style="top:501.22px;left:83.5px;width:267px;text-align:justify;text-align-last:left">compartir contenido.</div></div>
<div style="font-size:11.5px;line-height:15.4px;color:#231f20;font-weight:400"><div class="ln" style="top:532.52px;left:83.5px;width:267px;text-align:justify;text-align-last:justify">Según Solove (2007), “los usuarios deben ser</div><div class="ln" style="top:547.92px;left:83.5px;width:267px;text-align:justify;text-align-last:justify">cautelosos al compartir información personal en</div><div class="ln" style="top:563.32px;left:83.5px;width:267px;text-align:justify;text-align-last:justify">línea y considerar las posibles consecuencias a</div><div class="ln" style="top:578.72px;left:83.5px;width:267px;text-align:justify;text-align-last:left">largo plazo” (p. 42).</div></div>
<div class="a" style="left:373px;top:-30px;width:291px;height:281px;border-radius:24px;background:#f59d2d"></div>
<svg class="a" style="left:497px;top:14px" width="43" height="29" viewBox="0 0 42 29"><path d="M8 28c-5 0-8-4-8-9 0-9 6-16 15-19l2 3c-5 2-8 6-8 9 5 0 8 3 8 8s-4 8-9 8zM31 28c-5 0-8-4-8-9 0-9 6-16 15-19l2 3c-5 2-8 6-8 9 5 0 8 3 8 8s-4 8-9 8z" fill="#fff"/></svg>
<svg class="a" style="left:497px;top:197px" width="43" height="29" viewBox="0 0 42 29"><path d="M9 0c5 0 8 4 8 9 0 9-6 16-15 19l-2-3c5-2 8-6 8-9-5 0-8-3-8-8s4-8 9-8zM32 0c5 0 8 4 8 9 0 9-6 16-15 19l-2-3c5-2 8-6 8-9-5 0-8-3-8-8s4-8 9-8z" fill="#fff"/></svg>
<div style="font-size:12.75px;line-height:13.8px;color:#fff;font-weight:700"><div class="ln" style="top:53.48px;left:373px;width:291px;text-align:center">Técnicas de comunicación efectiva para</div><div class="ln" style="top:67.28px;left:373px;width:291px;text-align:center">campañas de concientización digital</div></div>
<div style="font-size:10.45px;line-height:13.03px;color:#fff8ee;font-weight:400"><div class="ln" style="top:90.66px;left:373px;width:291px;text-align:center">Las campañas de concienciación digital son</div><div class="ln" style="top:103.69px;left:373px;width:291px;text-align:center">fundamentales para educar a los usuarios sobre</div><div class="ln" style="top:116.72px;left:373px;width:291px;text-align:center">temas cruciales como la privacidad, la seguridad y</div><div class="ln" style="top:129.75px;left:373px;width:291px;text-align:center">la ciudadanía digital. Para asegurar su efectividad,</div><div class="ln" style="top:142.78px;left:373px;width:291px;text-align:center">es importante utilizar técnicas de comunicación</div><div class="ln" style="top:155.81px;left:373px;width:291px;text-align:center">adecuadas que capten la atención del público y</div><div class="ln" style="top:168.84px;left:373px;width:291px;text-align:center">transmitan el mensaje de manera clara y memorable.</div></div>
<div class="a" style="left:374.5px;top:301.01px;font-size:22.2px;line-height:23.8px;font-weight:700;color:#10294f;white-space:nowrap">Técnicas de<br>comunicación efectiva</div>
<div class="a" style="left:374.5px;top:357px;width:66.5px;height:15px;background:#12294d"></div>
<div class="a" style="left:441px;top:357px;width:66.5px;height:15px;background:#00b3b3"></div>
<div class="a" style="left:507.5px;top:357px;width:67.5px;height:15px;background:#f4ea35"></div>
<div class="a" style="left:575px;top:357px;width:68px;height:15px;background:#f6f08c"></div>
<svg class="a" style="left:373.5px;top:393.0px" width="26" height="26" viewBox="0 0 26 26"><circle cx="13" cy="13" r="11.8" fill="none" stroke="#f39a2f" stroke-width="1.9"/><path d="M9.3 6.5l9.5 6.6-9.5 6.6 2.6-6.6z" fill="#f39a2f"/></svg><div class="a" style="left:408.6px;top:391.66px;font-size:18.6px;line-height:19.2px;font-weight:700;color:#f39a2f;white-space:nowrap">Conocimiento del<br>público objetivo</div>
<div style="font-size:11.5px;line-height:15.4px;color:#231f20;font-weight:400"><div class="ln" style="top:454.92px;left:374.5px;width:268px;text-align:justify;text-align-last:justify">Es esencial conocer bien al público objetivo para</div><div class="ln" style="top:470.32px;left:374.5px;width:268px;text-align:justify;text-align-last:justify;letter-spacing:-0.137px">adaptar el mensaje y los canales de comunicación de</div><div class="ln" style="top:485.72px;left:374.5px;width:268px;text-align:justify;text-align-last:justify">manera efectiva. Según Kotler y Armstrong (2018),</div><div class="ln" style="top:501.12px;left:374.5px;width:268px;text-align:justify;text-align-last:justify">“comprender las características, necesidades</div><div class="ln" style="top:516.52px;left:374.5px;width:268px;text-align:justify;text-align-last:justify">y comportamientos del público objetivo permite</div><div class="ln" style="top:531.92px;left:374.5px;width:268px;text-align:justify;text-align-last:justify">diseñar mensajes más relevantes y persuasivos” (p.</div><div class="ln" style="top:547.32px;left:374.5px;width:268px;text-align:justify;text-align-last:justify">67). Realizar investigaciones previas y segmentar</div><div class="ln" style="top:562.72px;left:374.5px;width:268px;text-align:justify;text-align-last:justify">el público en grupos específicos puede mejorar la</div><div class="ln" style="top:578.12px;left:374.5px;width:268px;text-align:justify;text-align-last:left">efectividad de la campaña.</div></div>
<div style="font-size:11.5px;line-height:15.4px;color:#231f20;font-weight:400"><div class="ln" style="top:-11.38px;left:808.5px;width:267.5px;text-align:justify;text-align-last:justify">directo y conciso. Según Heath y Heath (2007), “un</div><div class="ln" style="top:4.02px;left:808.5px;width:267.5px;text-align:justify;text-align-last:justify">mensaje efectivo es simple y se centra en una idea</div><div class="ln" style="top:19.42px;left:808.5px;width:267.5px;text-align:justify;text-align-last:justify">central que puede ser fácilmente recordada” (p. 45).</div><div class="ln" style="top:34.82px;left:808.5px;width:267.5px;text-align:justify;text-align-last:justify;letter-spacing:-0.033px">Evitar el uso de jerga técnica y mantener el mensaje</div><div class="ln" style="top:50.22px;left:808.5px;width:267.5px;text-align:justify;text-align-last:justify">directo ayuda a que la audiencia lo comprenda y</div><div class="ln" style="top:65.62px;left:808.5px;width:267.5px;text-align:justify;text-align-last:left">retenga mejor.</div></div>
<svg class="a" style="left:808.0px;top:139.6px" width="26" height="26" viewBox="0 0 26 26"><circle cx="13" cy="13" r="11.8" fill="none" stroke="#f39a2f" stroke-width="1.9"/><path d="M9.3 6.5l9.5 6.6-9.5 6.6 2.6-6.6z" fill="#f39a2f"/></svg><div class="a" style="left:843px;top:138.26px;font-size:18.6px;line-height:19.2px;font-weight:700;color:#f39a2f;white-space:nowrap">Uso de historias y<br>testimonios</div>
<div style="font-size:11.5px;line-height:15.4px;color:#231f20;font-weight:400"><div class="ln" style="top:193.32px;left:808.5px;width:267.5px;text-align:justify;text-align-last:justify">Las historias y testimonios personales son</div><div class="ln" style="top:208.72px;left:808.5px;width:267.5px;text-align:justify;text-align-last:justify">herramientas poderosas para hacer que el mensaje</div><div class="ln" style="top:224.12px;left:808.5px;width:267.5px;text-align:justify;text-align-last:justify">sea más relatable y emocionalmente resonante.</div><div class="ln" style="top:239.52px;left:808.5px;width:267.5px;text-align:justify;text-align-last:justify">Según Morgan y Dennehy (1997), “las historias bien</div><div class="ln" style="top:254.92px;left:808.5px;width:267.5px;text-align:justify;text-align-last:justify;letter-spacing:-0.144px">contadas pueden capturar la atención de la audiencia</div><div class="ln" style="top:270.32px;left:808.5px;width:267.5px;text-align:justify;text-align-last:justify">y hacer que los mensajes sean más memorables y</div><div class="ln" style="top:285.72px;left:808.5px;width:267.5px;text-align:justify;text-align-last:justify;letter-spacing:-0.081px">persuasivos” (p.108). Incluir testimonios de personas</div><div class="ln" style="top:301.12px;left:808.5px;width:267.5px;text-align:justify;text-align-last:justify">afectadas puede humanizar el mensaje y aumentar</div><div class="ln" style="top:316.52px;left:808.5px;width:267.5px;text-align:justify;text-align-last:left">su impacto.</div></div>
<svg class="a" style="left:808.0px;top:372.6px" width="26" height="26" viewBox="0 0 26 26"><circle cx="13" cy="13" r="11.8" fill="none" stroke="#f39a2f" stroke-width="1.9"/><path d="M9.3 6.5l9.5 6.6-9.5 6.6 2.6-6.6z" fill="#f39a2f"/></svg><div class="a" style="left:843px;top:371.26px;font-size:18.6px;line-height:19.2px;font-weight:700;color:#f39a2f;white-space:nowrap">Visuales atractivos y<br>multimedia</div>
<div style="font-size:11.5px;line-height:15.4px;color:#231f20;font-weight:400"><div class="ln" style="top:428.12px;left:808.5px;width:267.5px;text-align:justify;text-align-last:justify;letter-spacing:-0.209px">Incorporar elementos visuales atractivos y multimedia,</div><div class="ln" style="top:443.52px;left:808.5px;width:267.5px;text-align:justify;text-align-last:justify;letter-spacing:-0.045px">como fotografías, videos y gráficos, puede aumentar</div><div class="ln" style="top:458.92px;left:808.5px;width:267.5px;text-align:justify;text-align-last:justify">la comprensión y el atractivo del mensaje. Mayer</div><div class="ln" style="top:474.32px;left:808.5px;width:267.5px;text-align:justify;text-align-last:justify">(2009) afirma que “el uso de imágenes y multimedia</div><div class="ln" style="top:489.72px;left:808.5px;width:267.5px;text-align:justify;text-align-last:justify">puede mejorar significativamente la comprensión</div><div class="ln" style="top:505.12px;left:808.5px;width:267.5px;text-align:justify;text-align-last:justify">y retención de la información” (p.23). Es esencial</div><div class="ln" style="top:520.52px;left:808.5px;width:267.5px;text-align:justify;text-align-last:justify">asegurarse de que los elementos visuales sean</div><div class="ln" style="top:535.92px;left:808.5px;width:267.5px;text-align:justify;text-align-last:left">relevantes y complementan el mensaje principal.</div></div>
<svg class="a" style="left:226px;top:176px" width="9" height="16" viewBox="0 0 9 16" fill="none" stroke="#333" stroke-width="1.2"><path d="M1 1h2.5c1 0 1 .5 1 1.5v11c0 1 0 1.5 1 1.5H8M8 1H5.5c-1 0-1 .5-1 1.5M4.5 13.5c0 1 0 1.5-1 1.5H1M2.5 8h4"/></svg>
  </div>
  <!-- v scrollbar -->
  <div class="a" style="left:1146px;top:61px;width:12px;height:606px;background:#1b1b1b"></div>
  <svg class="a" style="left:1148px;top:66px" width="8" height="6" viewBox="0 0 8 6" fill="none" stroke="#777" stroke-width="1.1"><path d="M1 5l3-3 3 3"/></svg>
  <div class="a" style="left:1147px;top:362px;width:10px;height:16px;background:#4a4a4a"></div>
  <svg class="a" style="left:1148px;top:646px" width="8" height="6" viewBox="0 0 8 6" fill="none" stroke="#777" stroke-width="1.1"><path d="M1 1l3 3 3-3"/></svg>
  <!-- right rail -->
  <div class="a" style="left:1158px;top:61px;width:38px;height:606px;background:#333;border-left:1px solid #444"></div>
  <svg class="a" style="left:1168px;top:72px" width="18" height="16" viewBox="0 0 18 16" fill="none" stroke="#e0e0e0" stroke-width="1.3"><path d="M1 1h11v8H6l-3 3V9H1z"/><path d="M14 4h3v8h-2v3l-3-3H7"/></svg>
  <svg class="a" style="left:1168px;top:101px" width="18" height="16" viewBox="0 0 18 16" fill="none" stroke="#e0e0e0" stroke-width="1.3"><path d="M2 1h8v14l-4-4-4 4z"/><path d="M12 4h4M12 7h4M12 10h4"/></svg>
  <svg class="a" style="left:1169px;top:130px" width="16" height="16" viewBox="0 0 16 16" fill="none" stroke="#e0e0e0" stroke-width="1.3"><path d="M1 3v10a2 2 0 0 0 2 2h1M5 1h6l4 4v10H5z"/></svg>
  <svg class="a" style="left:1169px;top:159px" width="16" height="16" viewBox="0 0 16 16" fill="none" stroke="#e0e0e0" stroke-width="1.5"><path d="M10.5 4l-6 6a1.7 1.7 0 0 0 2.5 2.5l6.5-6.5a3 3 0 0 0-4.2-4.2L2.8 8.3a4.2 4.2 0 0 0 6 6L13 10"/></svg>
  <div class="a" style="left:1165px;top:452px;width:26px;height:24px;border-radius:3px;background:#1b1b1b;border:1px solid #555"></div>
  <div class="a" style="left:1165px;top:457px;width:26px;font-size:9.5px;color:#fff;text-align:center">14</div>
  <div class="a" style="left:1165px;top:484px;width:26px;font-size:9.5px;color:#e6e6e6;text-align:center">26</div>
  <svg class="a" style="left:1173px;top:516px" width="10" height="7" viewBox="0 0 10 7" fill="none" stroke="#e0e0e0" stroke-width="1.5"><path d="M1 6l4-4 4 4"/></svg>
  <svg class="a" style="left:1173px;top:541px" width="10" height="7" viewBox="0 0 10 7" fill="none" stroke="#e0e0e0" stroke-width="1.5"><path d="M1 1l4 4 4-4"/></svg>
  <div class="a" style="left:1165px;top:558px;width:26px;height:1px;background:#4a4a4a"></div>
  <svg class="a" style="left:1170px;top:566px" width="15" height="15" viewBox="0 0 15 15" fill="none" stroke="#e0e0e0" stroke-width="1.5"><path d="M12.5 7.5a5.5 5.5 0 1 1-2-4.3M12 1v3.5H8.5"/></svg>
  <svg class="a" style="left:1170px;top:592px" width="16" height="17" viewBox="0 0 16 17" fill="none" stroke="#e0e0e0" stroke-width="1.3"><path d="M2 1h7l3 3v10H2z"/><path d="M4.5 8v4M7 8v4M9.5 8v4" stroke-width="1"/><path d="M13 16l2-2v2z" fill="#e0e0e0"/></svg>
  <svg class="a" style="left:1169px;top:620px" width="16" height="16" viewBox="0 0 16 16" fill="none" stroke="#e0e0e0" stroke-width="1.5"><circle cx="6.5" cy="6.5" r="5"/><path d="M10 10l5 5M4 6.5h5M6.5 4v5"/></svg>
  <svg class="a" style="left:1169px;top:647px" width="16" height="16" viewBox="0 0 16 16" fill="none" stroke="#e0e0e0" stroke-width="1.5"><circle cx="6.5" cy="6.5" r="5"/><path d="M10 10l5 5M4 6.5h5"/></svg>
  <!-- bottom status/hscroll -->
  <div class="a" style="left:50px;top:656px;width:1108px;height:11px;background:#2e2e2e"></div>
  <div class="a" style="left:50px;top:656px;width:104px;height:11px;background:#e6e6e6"></div>
  <div class="a" style="left:64px;top:657px;font-size:8.5px;color:#333;white-space:nowrap">431.8 x 279.4 mm</div>
  <div class="a" style="left:154px;top:656px;width:12px;height:11px;background:#1b1b1b"></div>
  <svg class="a" style="left:157px;top:658px" width="6" height="8" viewBox="0 0 6 8" fill="none" stroke="#aaa" stroke-width="1"><path d="M5 1L2 4l3 3"/></svg>
  <div class="a" style="left:166px;top:656px;width:730px;height:11px;background:#3c3c3c"></div>
  <div class="a" style="left:896px;top:656px;width:250px;height:11px;background:#141414"></div>
  <svg class="a" style="left:1136px;top:658px" width="6" height="8" viewBox="0 0 6 8" fill="none" stroke="#aaa" stroke-width="1"><path d="M1 1l3 3-3 3"/></svg>
</div>

<!--PANEL-->
<div class="a" style="left:1472px;top:223px;font-size:22px;font-weight:700;color:#242424">Participants</div>
<svg class="a" style="left:1856px;top:225px" width="20" height="20" viewBox="0 0 20 20" stroke="#424242" stroke-width="1.5"><path d="M1.5 1.5L18.5 18.5M18.5 1.5L1.5 18.5"/></svg>
<div class="a" style="left:1441px;top:278px;width:478px;height:1px;background:#e0e0e0"></div>
<div class="a" style="left:1471px;top:303px;width:420px;height:48px;border-radius:5px;background:#fff"></div>
<div class="a" style="left:1490px;top:318px;font-size:20px;color:#707070">Type a name</div>
<svg class="a" style="left:1848px;top:316px" width="24" height="23" viewBox="0 0 24 23" fill="none" stroke="#242424" stroke-width="1.8"><circle cx="9.5" cy="9.5" r="7.8"/><path d="M15.3 15.3l7 6.5"/></svg>
<div class="a" style="left:1471px;top:367px;width:419px;height:46px;border-radius:5px;background:#fff;border:1px solid #d9d9d9"></div>
<svg class="a" style="left:1608px;top:379px" width="26" height="24" viewBox="0 0 26 24" fill="none" stroke="#242424" stroke-width="1.7" stroke-linejoin="round"><path d="M9 4.5H5A3.5 3.5 0 0 0 1.5 8v11A3.5 3.5 0 0 0 5 22.5h12a3.5 3.5 0 0 0 3.5-3.5v-2"/><path d="M16 1.5l8 7-8 7v-4c-5 0-8 1.5-10 5 0-6 3.5-10.5 10-11z"/></svg>
<div class="a" style="left:1644px;top:379px;font-size:19.6px;font-weight:700;color:#242424">Share invite</div>
<svg class="a" style="left:1451px;top:444px" width="13" height="10" viewBox="0 0 13 10"><path d="M0.5 0.5h12L6.5 9.5z" fill="#424242"/></svg>
<div class="a" style="left:1471px;top:439px;font-size:18px;color:#242424">In this meeting (14)</div>
<div class="a" style="left:1759px;top:432px;width:108px;height:35px;border-radius:4px;background:#fff;border:1px solid #d1d1d1"></div>
<div class="a" style="left:1780px;top:440px;font-size:17.7px;font-weight:700;color:#242424">Mute all</div>
<div class="a" style="left:1473px;top:492px;width:48px;height:48px;border-radius:24px;overflow:hidden;background:#9cc0e0">
<svg width="48" height="48" viewBox="0 0 48 48"><defs><filter id="bla" x="-10%" y="-10%" width="120%" height="120%"><feGaussianBlur stdDeviation="0.6"/></filter></defs><g filter="url(#bla)"><rect width="48" height="48" fill="#b5d3ee"/><rect x="0" y="22" width="9" height="26" fill="#4f7fb4"/><rect x="5" y="28" width="8" height="20" fill="#7aa4d0"/><rect x="37" y="14" width="11" height="34" fill="#5f8fc4"/><rect x="33" y="26" width="6" height="22" fill="#8ab2da"/><rect x="22" y="0" width="2" height="20" fill="#e8f2fb"/>
<ellipse cx="24" cy="16" rx="9" ry="10" fill="#2a2224"/><ellipse cx="24" cy="18" rx="6.5" ry="8.5" fill="#c4a396"/><path d="M15 16a9 9 0 0 1 18 0" fill="none" stroke="#1a1416" stroke-width="2"/><rect x="13.5" y="15" width="3" height="6" rx="1.5" fill="#1a1416"/><rect x="31.5" y="15" width="3" height="6" rx="1.5" fill="#1a1416"/>
<path d="M3 48c2-12 10-18 21-18s19 6 21 18z" fill="#161a32"/><path d="M12 37c4 3 20 3 24 0M10 42c6 3 22 3 28 0" stroke="#d8d0c0" stroke-width="1.6" stroke-dasharray="1.6 1.6" fill="none"/></g></svg></div>
<div class="a" style="left:1533px;top:507px;font-size:20px;color:#242424">Annalissa Tabarini</div>
<svg class="a" style="left:1843px;top:504px" width="25" height="25" viewBox="0 0 25 25" fill="none" stroke="#424242" stroke-width="1.5"><rect x="8.6" y="1.3" width="7.8" height="14" rx="3.9"/><path d="M4.8 11a7.7 7.7 0 0 0 15.4 0M12.5 18.7v5"/><path d="M1.5 1.5l22 22" stroke="#f5f5f5" stroke-width="3.5"/><path d="M1.5 1.5l22 22"/></svg>
<div class="a" style="left:1473px;top:564px;width:48px;height:48px;border-radius:24px;background:#ecdbd4;color:#5a3620;font-size:19px;text-align:center;line-height:48px;font-weight:400;-webkit-text-stroke:0.5px #5a3620">AP</div>
<div class="a" style="left:1473px;top:636px;width:48px;height:48px;border-radius:24px;background:#d4dde2;color:#1e3f4f;font-size:19px;text-align:center;line-height:48px;font-weight:400;-webkit-text-stroke:0.5px #1e3f4f">MM</div>
<div class="a" style="left:1467px;top:702px;width:60px;height:60px;border-radius:30px;border:2.5px solid #5b5fc7"></div>
<div class="a" style="left:1473px;top:708px;width:48px;height:48px;border-radius:24px;background:#f6e6c4;color:#7b5a0c;font-size:19px;text-align:center;line-height:48px;font-weight:400;-webkit-text-stroke:0.5px #7b5a0c">CU</div>
<div class="a" style="left:1473px;top:780px;width:48px;height:48px;border-radius:24px;background:#d3ecdb;color:#1f6b3b;font-size:19px;text-align:center;line-height:48px;font-weight:400;-webkit-text-stroke:0.5px #1f6b3b">DV</div>
<div class="a" style="left:1473px;top:852px;width:48px;height:48px;border-radius:24px;background:#fcecc4;color:#7b5a0c;font-size:19px;text-align:center;line-height:48px;font-weight:400;-webkit-text-stroke:0.5px #7b5a0c">DT</div>
<div class="a" style="left:1473px;top:924px;width:48px;height:48px;border-radius:24px;background:#c7d5e9;color:#0f2a5c;font-size:19px;text-align:center;line-height:48px;font-weight:400;-webkit-text-stroke:0.5px #0f2a5c">D</div>
<div class="a" style="left:1533px;top:579px;font-size:20px;color:#242424">Alejandro P...</div>
<div class="a" style="left:1630px;top:579px;font-size:20px;color:#242424;width:200px;text-align:right;white-space:nowrap;letter-spacing:0.5px">(No comprobado)</div>
<svg class="a" style="left:1843px;top:576px" width="25" height="25" viewBox="0 0 25 25" fill="none" stroke="#424242" stroke-width="1.5"><rect x="8.6" y="1.3" width="7.8" height="14" rx="3.9"/><path d="M4.8 11a7.7 7.7 0 0 0 15.4 0M12.5 18.7v5"/><path d="M1.5 1.5l22 22" stroke="#f5f5f5" stroke-width="3.5"/><path d="M1.5 1.5l22 22"/></svg>
<div class="a" style="left:1533px;top:651px;font-size:19.4px;color:#242424;white-space:nowrap">CAMPOS MARTINEZ, MARIA JI...</div>
<svg class="a" style="left:1843px;top:648px" width="25" height="25" viewBox="0 0 25 25" fill="none" stroke="#424242" stroke-width="1.5"><rect x="8.6" y="1.3" width="7.8" height="14" rx="3.9"/><path d="M4.8 11a7.7 7.7 0 0 0 15.4 0M12.5 18.7v5"/><path d="M1.5 1.5l22 22" stroke="#f5f5f5" stroke-width="3.5"/><path d="M1.5 1.5l22 22"/></svg>
<div class="a" style="left:1533px;top:711px;font-size:20px;font-weight:700;color:#242424;white-space:nowrap;letter-spacing:-0.3px">Curso Formación Ci...</div>
<div class="a" style="left:1745px;top:711px;font-size:20px;font-weight:700;color:#242424;white-space:nowrap;letter-spacing:-0.5px">(Externo)</div>
<div class="a" style="left:1533px;top:737px;font-size:16.8px;color:#616161">Organiser</div>
<svg class="a" style="left:1845px;top:719px" width="20" height="26" viewBox="0 0 20 26"><rect x="5.5" y="1" width="9" height="15" rx="4.5" fill="#242424"/><path d="M2 11.5a8 8 0 0 0 16 0M10 19.5v6" fill="none" stroke="#242424" stroke-width="1.7"/></svg>
<div class="a" style="left:1533px;top:795px;font-size:20px;color:#242424;white-space:nowrap">Dania Verbe...</div>
<div class="a" style="left:1630px;top:795px;font-size:20px;color:#242424;width:200px;text-align:right;white-space:nowrap;letter-spacing:0.5px">(No comprobado)</div>
<svg class="a" style="left:1843px;top:792px" width="25" height="25" viewBox="0 0 25 25" fill="none" stroke="#424242" stroke-width="1.5"><rect x="8.6" y="1.3" width="7.8" height="14" rx="3.9"/><path d="M4.8 11a7.7 7.7 0 0 0 15.4 0M12.5 18.7v5"/><path d="M1.5 1.5l22 22" stroke="#f5f5f5" stroke-width="3.5"/><path d="M1.5 1.5l22 22"/></svg>
<div class="a" style="left:1533px;top:867px;font-size:19.4px;color:#242424;white-space:nowrap">DENNIS ALEXANDER GUZMA...</div>
<svg class="a" style="left:1843px;top:864px" width="25" height="25" viewBox="0 0 25 25" fill="none" stroke="#424242" stroke-width="1.5"><rect x="8.6" y="1.3" width="7.8" height="14" rx="3.9"/><path d="M4.8 11a7.7 7.7 0 0 0 15.4 0M12.5 18.7v5"/><path d="M1.5 1.5l22 22" stroke="#f5f5f5" stroke-width="3.5"/><path d="M1.5 1.5l22 22"/></svg>
<div class="a" style="left:1533px;top:939px;font-size:20px;color:#242424;white-space:nowrap">disenadorweb@ume...</div>
<div class="a" style="left:1630px;top:939px;font-size:20px;color:#242424;width:200px;text-align:right;white-space:nowrap">(Externo)</div>
<svg class="a" style="left:1843px;top:936px" width="25" height="25" viewBox="0 0 25 25" fill="none" stroke="#424242" stroke-width="1.5"><rect x="8.6" y="1.3" width="7.8" height="14" rx="3.9"/><path d="M4.8 11a7.7 7.7 0 0 0 15.4 0M12.5 18.7v5"/><path d="M1.5 1.5l22 22" stroke="#f5f5f5" stroke-width="3.5"/><path d="M1.5 1.5l22 22"/></svg>
<div class="a" style="left:1473px;top:996px;width:48px;height:48px;border-radius:24px;background:#d4dde2"></div>
<div class="a" style="left:1432px;top:193px;width:278px;height:41px;border-radius:6px;background:#fff;box-shadow:0 2px 6px rgba(0,0,0,0.16)"></div>
<div class="a" style="left:1460px;top:186px;width:14px;height:14px;background:#fff;transform:rotate(45deg);top:187px"></div>
<div class="a" style="left:1450px;top:201px;font-size:18px;color:#242424;white-space:nowrap">Turn camera off (Ctrl+Shift+O)</div>
<!--/PANEL-->
<div id="taskbar" class="a">
  <!-- weather -->
  <svg class="a" style="left:28px;top:14px" width="38" height="36" viewBox="0 0 38 36">
    <defs><linearGradient id="mn" x1="0" y1="0" x2="1" y2="1"><stop offset="0" stop-color="#ffd04a"/><stop offset="1" stop-color="#f07a10"/></linearGradient>
    <linearGradient id="cl" x1="0" y1="0" x2="0" y2="1"><stop offset="0" stop-color="#f2f6fd"/><stop offset="1" stop-color="#9fb6e6"/></linearGradient>
    <mask id="mm"><rect width="38" height="36" fill="#fff"/><circle cx="11" cy="11" r="13" fill="#000"/></mask></defs>
    <circle cx="19" cy="18" r="15.5" fill="url(#mn)" mask="url(#mm)"/>
    <path d="M4 13a4.5 4.5 0 0 1 1-8.5 6 6 0 0 1 11 1 4 4 0 0 1 3 7.5z" fill="url(#cl)"/>
    <path d="M17 33a4.5 4.5 0 0 1 1-8.5 6 6 0 0 1 11-1 4.5 4.5 0 0 1 7 3 3.5 3.5 0 0 1-1 6.5z" fill="url(#cl)"/>
  </svg>
  <div class="a" style="left:76px;top:13px;font-size:17.5px;color:#1b1b1b">21°C</div>
  <div class="a" style="left:76px;top:36px;font-size:17.6px;color:#5d5d5d;white-space:nowrap">Parc. nublado</div>
  <!-- start -->
  <svg class="a" style="left:575px;top:18px" width="36" height="36" viewBox="0 0 36 36">
    <defs><linearGradient id="st" x1="0" y1="0" x2="1" y2="1"><stop offset="0" stop-color="#3ccbf4"/><stop offset="1" stop-color="#0a68d4"/></linearGradient></defs>
    <rect x="0.5" y="0.5" width="16.5" height="16.5" rx="1" fill="url(#st)"/>
    <rect x="19" y="0.5" width="16.5" height="16.5" rx="1" fill="url(#st)"/>
    <rect x="0.5" y="19" width="16.5" height="16.5" rx="1" fill="url(#st)"/>
    <rect x="19" y="19" width="16.5" height="16.5" rx="1" fill="url(#st)"/>
  </svg>
  <!-- search -->
  <div class="a" style="left:632px;top:12px;width:327px;height:45px;border-radius:23px;background:#f4f6f9;border:1px solid #cfd5db"></div>
  <svg class="a" style="left:648px;top:24px" width="23" height="23" viewBox="0 0 23 23" fill="none" stroke="#1b1b1b" stroke-width="2.2"><circle cx="9.5" cy="9.5" r="7.5"/><path d="M15 15l6.5 6.5"/></svg>
  <div class="a" style="left:687px;top:25px;font-size:20.5px;color:#5d5d5d">Buscar</div>
  <svg class="a" style="left:880px;top:23px" width="76" height="33" viewBox="0 0 76 33">
    <ellipse cx="38" cy="20" rx="37" ry="12" fill="#4ec3ea"/>
    <ellipse cx="40" cy="18" rx="28" ry="8" fill="#8ad8f2"/>
    <path d="M18 20c8 6 30 8 46-4 2-3-1-6-6-5-4 1-2 4-6 6-10 4-24 3-34 1z" fill="#a0683a"/>
    <path d="M10 10c6-6 14-9 22-6l-6 3z" fill="#3c8a4a"/>
  </svg>
  <!-- copilot -->
  <svg class="a" style="left:980px;top:18px" width="36" height="36" viewBox="0 0 36 36">
    <defs><linearGradient id="cpl" x1="0" y1="1" x2="0.6" y2="0"><stop offset="0" stop-color="#f6c343"/><stop offset="0.45" stop-color="#4fc47c"/><stop offset="1" stop-color="#1e8de8"/></linearGradient>
    <linearGradient id="cpr" x1="0" y1="0" x2="1" y2="1"><stop offset="0" stop-color="#3a6ff0"/><stop offset="0.5" stop-color="#b24fe0"/><stop offset="1" stop-color="#f06aa0"/></linearGradient></defs>
    <path d="M13 3h11c3 0 4.5 1.5 5.5 4.5L34 22c1 3-1 6-4 6h-6l-5-17c-.8-2.5-2.5-4-5-4z" fill="url(#cpr)"/>
    <path d="M23 33H12c-3 0-4.5-1.5-5.5-4.5L2 14c-1-3 1-6 4-6h6l5 17c.8 2.5 2.5 4 5 4z" fill="url(#cpl)"/>
    <rect x="8" y="25" width="27" height="10" rx="2.5" fill="#ffc000"/>
    <text x="21.5" y="33.5" font-family="Liberation Sans" font-size="9" font-weight="700" text-anchor="middle" fill="#1b1b1b">PRE</text>
  </svg>
  <!-- app -->
  <div class="a" style="left:1054px;top:17px;width:27px;height:23px;border-radius:2px;background:linear-gradient(135deg,#ffffff,#d9d9d9)"></div>
  <div class="a" style="left:1045px;top:26px;width:27px;height:25px;border-radius:2px;background:linear-gradient(180deg,#3a3a3a,#111)"></div>
  <div class="a" style="left:1054px;top:26px;width:18px;height:14px;background:linear-gradient(135deg,#cfcfcf,#9a9a9a)"></div>
  <!-- outlook -->
  <svg class="a" style="left:1110px;top:17px" width="37" height="34" viewBox="0 0 37 34">
    <rect x="10" y="0.5" width="25" height="16" rx="1" fill="#0f6cbd"/>
    <rect x="22" y="0.5" width="13" height="8" fill="#28a8ea"/>
    <rect x="16" y="8" width="8" height="8" fill="#0078d4"/>
    <path d="M9 15l14 8 13-8v16a2 2 0 0 1-2 2H11a2 2 0 0 1-2-2z" fill="#1490df"/>
    <path d="M9 33l27-18v16a2 2 0 0 1-2 2z" fill="#28a8ea"/>
    <rect x="0.5" y="6" width="18" height="18" rx="2" fill="#0f6cbd"/>
    <ellipse cx="9.5" cy="15" rx="4.8" ry="5.5" fill="none" stroke="#fff" stroke-width="2.2"/>
  </svg>
  <!-- edge -->
  <svg class="a" style="left:1176px;top:15px" width="38" height="38" viewBox="0 0 38 38">
    <defs><linearGradient id="eg" x1="0" y1="0" x2="1" y2="1"><stop offset="0" stop-color="#1a9ad8"/><stop offset="0.6" stop-color="#35c1f1"/><stop offset="1" stop-color="#6ee05a"/></linearGradient></defs>
    <path d="M2 18C2 8 10 1 20 1s17 7 17 15c0 6-4 9-9 9-4 0-6-2-6-4 0-2 2-3 2-6s-3-6-8-6C8 9 2 14 2 22z" fill="url(#eg)"/>
    <path d="M2 22c0 9 8 15 17 15 7 0 12-3 15-8-4 3-10 3-14 0-5-3-6-9-3-13-8 0-15 1-15 6z" fill="#0c59a4"/>
    <rect x="1" y="24" width="17" height="13" rx="1.5" fill="#d48a20"/>
    <rect x="6" y="21" width="7" height="4" rx="1" fill="none" stroke="#8a5a10" stroke-width="1.5"/>
    <rect x="1" y="28" width="17" height="2" fill="#b06a10"/>
  </svg>
  <!-- files -->
  <svg class="a" style="left:1242px;top:17px" width="37" height="34" viewBox="0 0 37 34">
    <path d="M1 3a2 2 0 0 1 2-2h9l3 3h19a2 2 0 0 1 2 2v4H1z" fill="#e8a317"/>
    <rect x="1" y="6" width="35" height="27" rx="2" fill="#fcd24a"/>
    <path d="M7 33v-9a3 3 0 0 1 3-3h17a3 3 0 0 1 3 3v9z" fill="#1e82dc"/>
    <rect x="12" y="25" width="13" height="1.5" fill="#0b4f9a"/>
  </svg>
  <!-- teams active -->
  <div class="a" style="left:1299px;top:7px;width:56px;height:56px;border-radius:5px;background:rgba(255,255,255,0.55);border:1px solid rgba(200,210,220,0.6)"></div>
  <svg class="a" style="left:1308px;top:18px" width="37" height="35" viewBox="0 0 37 35">
    <circle cx="19" cy="5" r="4.5" fill="#7b83eb"/>
    <circle cx="29" cy="7" r="3.5" fill="#5b5fc7"/>
    <path d="M22 12h11a1.5 1.5 0 0 1 1.5 1.5V23a5 5 0 0 1-10 0z" fill="#5b5fc7"/>
    <path d="M11 12h15v13a7 7 0 0 1-14 0z" fill="#7b83eb"/>
    <rect x="0.5" y="9" width="18" height="18" rx="1.5" fill="#4b53bc"/>
    <path d="M4.5 13h10v2.5h-3.7V24H8.2v-8.5H4.5z" fill="#fff"/>
    <rect x="14" y="24" width="23" height="11" rx="2" fill="#1fd1d1"/>
    <text x="25.5" y="33" font-family="Liberation Sans" font-size="9" font-weight="700" text-anchor="middle" fill="#1b1b1b">NEW</text>
  </svg>
  <div class="a" style="left:1315px;top:59px;width:24px;height:4px;border-radius:2px;background:#5a5a5a"></div>
  <!-- tray -->
  <svg class="a" style="left:1444px;top:29px" width="18" height="11" viewBox="0 0 18 11" fill="none" stroke="#1b1b1b" stroke-width="1.8"><path d="M1.5 9.5L9 2l7.5 7.5"/></svg>
  <svg class="a" style="left:1488px;top:26px" width="26" height="17" viewBox="0 0 26 17">
    <path d="M6 16a5 5 0 0 1-1-10 7 7 0 0 1 13-2 5.5 5.5 0 0 1 6 6 3.5 3.5 0 0 1-1 6z" fill="#0f78d4"/>
    <path d="M6 16a5 5 0 0 1 2-8c3-1 6 0 8 3l3 5z" fill="#1c90f0"/>
  </svg>
  <svg class="a" style="left:1533px;top:22px" width="32" height="26" viewBox="0 0 32 26" fill="none" stroke="#1b1b1b" stroke-width="1.5">
    <rect x="4" y="1" width="8" height="12" rx="4"/><path d="M1.5 9a6.5 6.5 0 0 0 13 0M8 15.5v3"/>
    <path d="M30 7L17 13l6 1 2 7z" stroke-linejoin="round"/>
  </svg>
  <div class="a" style="left:1592px;top:26px;font-size:17.8px;color:#1b1b1b;transform:scaleX(0.81);transform-origin:0 0">ESP</div>
  <svg class="a" style="left:1651px;top:25px" width="25" height="18" viewBox="0 0 25 18" fill="none" stroke="#1b1b1b" stroke-width="1.7">
    <path d="M1 6.5a16 16 0 0 1 23 0M4.5 10a11 11 0 0 1 16 0M8 13.5a6 6 0 0 1 9 0"/><circle cx="12.5" cy="16" r="1.5" fill="#1b1b1b" stroke="none"/>
  </svg>
  <svg class="a" style="left:1687px;top:25px" width="25" height="18" viewBox="0 0 25 18" fill="none" stroke="#1b1b1b" stroke-width="1.6">
    <path d="M1.5 6h4l5-4.5v15l-5-4.5h-4z"/><path d="M14 5.5a5 5 0 0 1 0 7M17 3a8.5 8.5 0 0 1 0 12"/><path d="M20 1a11.5 11.5 0 0 1 0 16" stroke="#9a9a9a"/>
  </svg>
  <svg class="a" style="left:1722px;top:22px" width="27" height="21" viewBox="0 0 27 21" fill="none" stroke="#1b1b1b" stroke-width="1.7">
    <rect x="2" y="7" width="19" height="12" rx="2"/><path d="M23 11v4" stroke-width="2.5"/><path d="M4 17V9h13l-4 8z" fill="#1b1b1b" stroke="none"/><path d="M8 1L4 7h4l-3 5" stroke-width="1.4"/>
  </svg>
  <div class="a" style="left:1776px;top:13px;width:78px;text-align:right;font-size:17.7px;color:#1b1b1b">12:51</div>
  <div class="a" style="left:1756px;top:37px;width:98px;text-align:right;font-size:17.7px;color:#1b1b1b">6/08/2024</div>
  <svg class="a" style="left:1867px;top:23px" width="22" height="25" viewBox="0 0 22 25">
    <path d="M11 1a7 7 0 0 1 7 7v6l3 4H1l3-4V8a7 7 0 0 1 7-7z" fill="#1b1b1b"/><path d="M7.5 20.5a3.5 3.5 0 0 0 7 0z" fill="#1b1b1b"/>
  </svg>
</div>
<!-- name label overlay -->
<div class="a" style="left:19px;top:948px;width:467px;height:35px;border-radius:5px;background:rgba(0,0,0,0.52)"></div>
<div class="a" style="left:28px;top:955px;font-size:17.4px;color:#fff;white-space:nowrap">Curso Formación Ciudadana Y Tecnológica URL (Externo)</div>

</body></html>
